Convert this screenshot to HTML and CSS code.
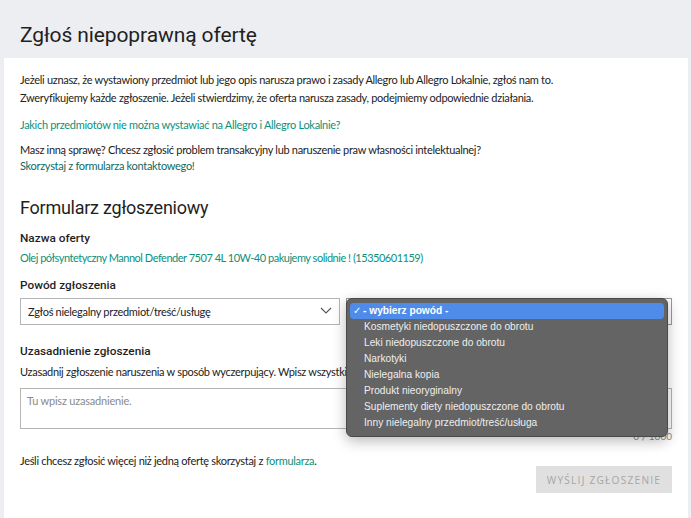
FILE: index.html
```html
<!DOCTYPE html>
<html lang="pl">
<head>
<meta charset="utf-8">
<title>Zgłoś niepoprawną ofertę</title>
<link rel="stylesheet" href="styles.css">
</head>
<body>
<header class="page-head">
  <h1 class="page-title">Zgłoś niepoprawną ofertę</h1>
</header>
<main class="card">
  <p class="txt intro">Jeżeli uznasz, że wystawiony przedmiot lub jego opis narusza prawo i zasady Allegro lub Allegro Lokalnie, zgłoś nam to.<br>Zweryfikujemy każde zgłoszenie. Jeżeli stwierdzimy, że oferta narusza zasady, podejmiemy odpowiednie działania.</p>
  <p class="txt link-line"><a class="lnk" href="#">Jakich przedmiotów nie można wystawiać na Allegro i Allegro Lokalnie?</a></p>
  <p class="txt other">Masz inną sprawę? Chcesz zgłosić problem transakcyjny lub naruszenie praw własności intelektualnej?<br><a class="lnk dark" href="#">Skorzystaj z formularza kontaktowego!</a></p>

  <h2 class="form-title">Formularz zgłoszeniowy</h2>

  <h3 class="label first">Nazwa oferty</h3>
  <p class="txt offer"><a class="lnk" href="#">Olej półsyntetyczny Mannol Defender 7507 4L 10W-40 pakujemy solidnie ! (15350601159)</a></p>

  <h3 class="label">Powód zgłoszenia</h3>
  <div class="selects">
    <div class="select">
      <span class="select-val">Zgłoś nielegalny przedmiot/treść/usługę</span>
      <svg class="chev" width="12" height="7" viewBox="0 0 12 7"><path d="M1 1l5 5 5-5" fill="none" stroke="#555" stroke-width="1.1"/></svg>
    </div>
    <div class="select second">
      <div class="menu">
        <div class="opt sel"><span class="check">✓</span>- wybierz powód -</div>
        <div class="opt">Kosmetyki niedopuszczone do obrotu</div>
        <div class="opt">Leki niedopuszczone do obrotu</div>
        <div class="opt">Narkotyki</div>
        <div class="opt">Nielegalna kopia</div>
        <div class="opt">Produkt nieoryginalny</div>
        <div class="opt">Suplementy diety niedopuszczone do obrotu</div>
        <div class="opt">Inny nielegalny przedmiot/treść/usługa</div>
      </div>
    </div>
  </div>

  <h3 class="label just">Uzasadnienie zgłoszenia</h3>
  <p class="txt desc">Uzasadnij zgłoszenie naruszenia w sposób wyczerpujący. Wpisz wszystkie informacje, które pomogą nam zweryfikować zgłoszenie.</p>
  <div class="area">Tu wpisz uzasadnienie.</div>
  <div class="counter">0 / 1000</div>

  <p class="txt more">Jeśli chcesz zgłosić więcej niż jedną ofertę skorzystaj z <a class="lnk" href="#">formularza</a>.</p>
  <div class="actions"><button class="btn" type="button">WYŚLIJ ZGŁOSZENIE</button></div>
</main>
</body>
</html>
```
FILE: styles.css
```css
html, body { margin: 0; padding: 0; }
body {
  background: #eceef2;
  font-family: Lato, "Open Sans", "Liberation Sans", sans-serif;
  color: #222;
  width: 691px;
  height: 518px;
  overflow: hidden;
}
.page-head {
  height: 58px;
  padding: 0 20px;
  display: flex;
  align-items: center;
}
.page-title {
  margin: 0;
  font-family: Roboto, "Liberation Sans", sans-serif;
  font-weight: 400;
  font-size: 21px;
  letter-spacing: -0.1px;
  color: #1f1f1f;
  position: relative;
  top: 6px;
}
.card {
  box-sizing: border-box;
  background: #fff;
  margin: 0 3px 0 4px;
  padding: 13px 16px 25px 16px;
  min-height: 460px;
}
.txt {
  margin: 0;
  font-size: 11px;
  letter-spacing: -0.3px;
  line-height: 17px;
  color: #222;
  white-space: nowrap;
}
.intro { line-height: 18px; }
.link-line { margin-top: 9px; }
.other { margin-top: 9px; line-height: 16px; }
.lnk { color: #0b917b; text-decoration: none; }
.lnk.dark { color: #0f6a62; }
.form-title {
  margin: 22px 0 0;
  font-family: Roboto, "Liberation Sans", sans-serif;
  font-weight: 400;
  font-size: 18px;
  letter-spacing: -0.25px;
  line-height: 24px;
  color: #1f1f1f;
}
.label {
  margin: 11px 0 0;
  font-family: Roboto, "Liberation Sans", sans-serif;
  font-weight: 500;
  font-size: 11.8px;
  line-height: 16px;
  color: #1f1f1f;
}
.label.first { margin-top: 10px; }
.offer { margin-top: 3px; letter-spacing: -0.48px; }
.selects {
  margin-top: 5px;
  display: flex;
  gap: 6px;
}
.select {
  box-sizing: border-box;
  height: 27px;
  width: 320px;
  border: 1px solid #b5b5b5;
  display: flex;
  align-items: center;
  justify-content: space-between;
  padding: 0 7px 0 7px;
  font-size: 11px;
  letter-spacing: -0.3px;
  color: #222;
  position: relative;
}
.select.second { flex: 1; border-color: #9a9a9a; }
.chev { margin-top: -3px; }
.menu {
  position: absolute;
  left: -1px;
  top: -1px;
  width: 322px;
  box-sizing: border-box;
  background: #646464;
  border: 1px solid #4a4a4a;
  border-radius: 6px;
  padding: 4px 3px 5px;
  box-shadow: 0 4px 14px rgba(0,0,0,0.28);
  font-family: "Liberation Sans", Arial, sans-serif;
  font-size: 10.2px;
  letter-spacing: 0;
  color: #eeeeee;
  z-index: 5;
}
.opt {
  height: 16px;
  line-height: 16px;
  padding-left: 14px;
  white-space: nowrap;
}
.opt.sel {
  background: #4f8be9;
  border-radius: 4px;
  color: #fff;
  padding-left: 3px;
  font-weight: 700;
}
.check { display: inline-block; width: 10px; font-size: 10px; font-weight: 400; }
.just { margin-top: 18px; }
.desc { margin-top: 4px; }
.area {
  margin-top: 8px;
  box-sizing: border-box;
  height: 41px;
  border: 1px solid #b5b5b5;
  padding: 5px 6px;
  font-size: 11px;
  letter-spacing: -0.2px;
  color: #8a8a8a;
}
.counter {
  text-align: right;
  font-size: 10px;
  color: #8a8a8a;
  line-height: 14px;
}
.more { margin-top: 9px; }
.actions {
  display: flex;
  justify-content: flex-end;
  margin-top: -3px;
}
.btn {
  width: 136px;
  height: 27px;
  border: none;
  background: #e0e0e0;
  color: #a6a6a6;
  font-family: "Open Sans", "Liberation Sans", sans-serif;
  font-size: 10.2px;
  letter-spacing: 1.2px;
  padding: 0;
}
```
